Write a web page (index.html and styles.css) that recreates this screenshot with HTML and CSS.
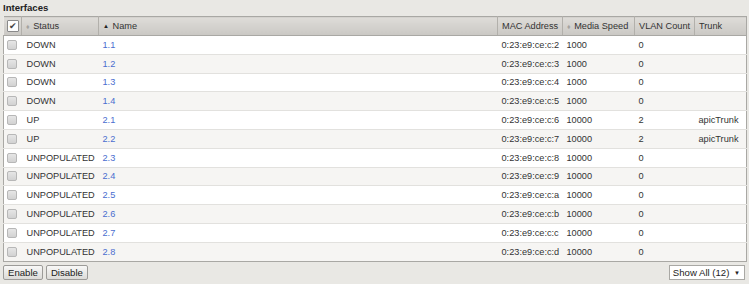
FILE: index.html
```html
<!DOCTYPE html>
<html lang="en">
<head>
  <meta charset="utf-8" />
  <title>Interfaces</title>
  <link rel="stylesheet" href="styles.css">
</head>
<body>
  <div class="panel">
    <div class="title">Interfaces</div>
    <table class="grid">
      <colgroup>
        <col style="width:18px">
        <col style="width:77px">
        <col>
        <col style="width:65px">
        <col style="width:72px">
        <col style="width:60px">
        <col style="width:52px">
      </colgroup>
      <thead>
        <tr>
          <th class="chk"><span class="box checked">&#10004;</span></th>
          <th><span class="sort">&#9830;</span> Status</th>
          <th><span class="sort up">&#9650;</span> Name</th>
          <th>MAC Address</th>
          <th><span class="sort">&#9830;</span> Media Speed</th>
          <th>VLAN Count</th>
          <th>Trunk</th>
        </tr>
      </thead>
      <tbody>
        <tr><td class="chk"><span class="box"></span></td><td>DOWN</td><td><a href="#">1.1</a></td><td>0:23:e9:ce:c:2</td><td>1000</td><td>0</td><td></td></tr>
        <tr><td class="chk"><span class="box"></span></td><td>DOWN</td><td><a href="#">1.2</a></td><td>0:23:e9:ce:c:3</td><td>1000</td><td>0</td><td></td></tr>
        <tr><td class="chk"><span class="box"></span></td><td>DOWN</td><td><a href="#">1.3</a></td><td>0:23:e9:ce:c:4</td><td>1000</td><td>0</td><td></td></tr>
        <tr><td class="chk"><span class="box"></span></td><td>DOWN</td><td><a href="#">1.4</a></td><td>0:23:e9:ce:c:5</td><td>1000</td><td>0</td><td></td></tr>
        <tr><td class="chk"><span class="box"></span></td><td>UP</td><td><a href="#">2.1</a></td><td>0:23:e9:ce:c:6</td><td>10000</td><td>2</td><td>apicTrunk</td></tr>
        <tr><td class="chk"><span class="box"></span></td><td>UP</td><td><a href="#">2.2</a></td><td>0:23:e9:ce:c:7</td><td>10000</td><td>2</td><td>apicTrunk</td></tr>
        <tr><td class="chk"><span class="box"></span></td><td>UNPOPULATED</td><td><a href="#">2.3</a></td><td>0:23:e9:ce:c:8</td><td>10000</td><td>0</td><td></td></tr>
        <tr><td class="chk"><span class="box"></span></td><td>UNPOPULATED</td><td><a href="#">2.4</a></td><td>0:23:e9:ce:c:9</td><td>10000</td><td>0</td><td></td></tr>
        <tr><td class="chk"><span class="box"></span></td><td>UNPOPULATED</td><td><a href="#">2.5</a></td><td>0:23:e9:ce:c:a</td><td>10000</td><td>0</td><td></td></tr>
        <tr><td class="chk"><span class="box"></span></td><td>UNPOPULATED</td><td><a href="#">2.6</a></td><td>0:23:e9:ce:c:b</td><td>10000</td><td>0</td><td></td></tr>
        <tr><td class="chk"><span class="box"></span></td><td>UNPOPULATED</td><td><a href="#">2.7</a></td><td>0:23:e9:ce:c:c</td><td>10000</td><td>0</td><td></td></tr>
        <tr><td class="chk"><span class="box"></span></td><td>UNPOPULATED</td><td><a href="#">2.8</a></td><td>0:23:e9:ce:c:d</td><td>10000</td><td>0</td><td></td></tr>
      </tbody>
    </table>
    <div class="footer">
      <div class="actions">
        <button class="btn">Enable</button>
        <button class="btn">Disable</button>
      </div>
      <div class="pager">Show All (12) <span class="caret">&#9660;</span></div>
    </div>
  </div>
</body>
</html>
```

FILE: styles.css
```css
body {
  margin: 0;
  background-color: #e9e8e4;
  font-family: 'Liberation Sans', Arial, sans-serif;
  font-size: 9.2px;
  color: #333;
}

.panel {
  padding: 2px 2px 0 3px;
}

.title {
  font-weight: bold;
  font-size: 9.6px;
  color: #222;
  height: 14px;
  line-height: 12px;
}

.grid {
  width: 744px;
  border-collapse: collapse;
  table-layout: fixed;
  border: 1px solid #a9a8a4;
  background-color: #fff;
}

.grid th {
  height: 18px;
  padding: 0 0 0 4px;
  text-align: left;
  font-weight: normal;
  color: #333;
  background: linear-gradient(#dedcd8, #cac8c4);
  border-right: 1px solid #b2b0ab;
  border-left: 1px solid #eceae6;
  border-bottom: 1px solid #a9a8a4;
  white-space: nowrap;
  overflow: hidden;
}

.grid th:last-child {
  border-right: none;
}

.grid td {
  height: 17.8px;
  padding: 0 0 0 4px;
  border-bottom: 1px solid #e2e1de;
  white-space: nowrap;
  overflow: hidden;
}

.grid tbody tr:nth-child(even) td {
  background-color: #f6f5f3;
}

.grid tbody tr:last-child td {
  border-bottom: none;
}

.grid .chk {
  padding: 0 0 0 3px;
}

.grid td:nth-child(2) {
  padding-left: 5px;
}

.grid a {
  color: #4a6dcf;
  text-decoration: none;
}

.box {
  display: block;
  width: 10px;
  height: 10px;
  border: 1px solid #b7b7b7;
  border-radius: 2px;
  background: linear-gradient(#e6e6e6, #d2d2d2);
  box-sizing: border-box;
}

.box.checked {
  width: 12px;
  height: 12px;
  background: #fdfdfd;
  border-color: #8a8a8a;
  border-radius: 1px;
  color: #444;
  font-size: 9px;
  line-height: 10px;
  text-align: center;
}

.sort {
  color: #a5a39f;
  font-size: 7px;
  margin-right: 1px;
}

.sort.up {
  color: #222;
  font-size: 6px;
  vertical-align: 1px;
}

.footer {
  display: flex;
  justify-content: space-between;
  align-items: center;
  padding-top: 3px;
}

.actions {
  display: flex;
  gap: 3px;
}

.btn {
  font-family: inherit;
  font-size: 9.6px;
  color: #222;
  height: 15px;
  padding: 0 4px;
  border: 1px solid #9c9b98;
  border-radius: 2px;
  background: linear-gradient(#f8f8f7, #dcdbd8);
}

.pager {
  height: 15px;
  line-height: 13px;
  box-sizing: border-box;
  padding: 0 4px 0 3px;
  margin-right: 2px;
  border: 1px solid #a9a8a4;
  background-color: #fff;
  font-size: 9.6px;
  color: #222;
}

.caret {
  font-size: 6px;
  vertical-align: 1px;
  margin-left: 2px;
}
```
